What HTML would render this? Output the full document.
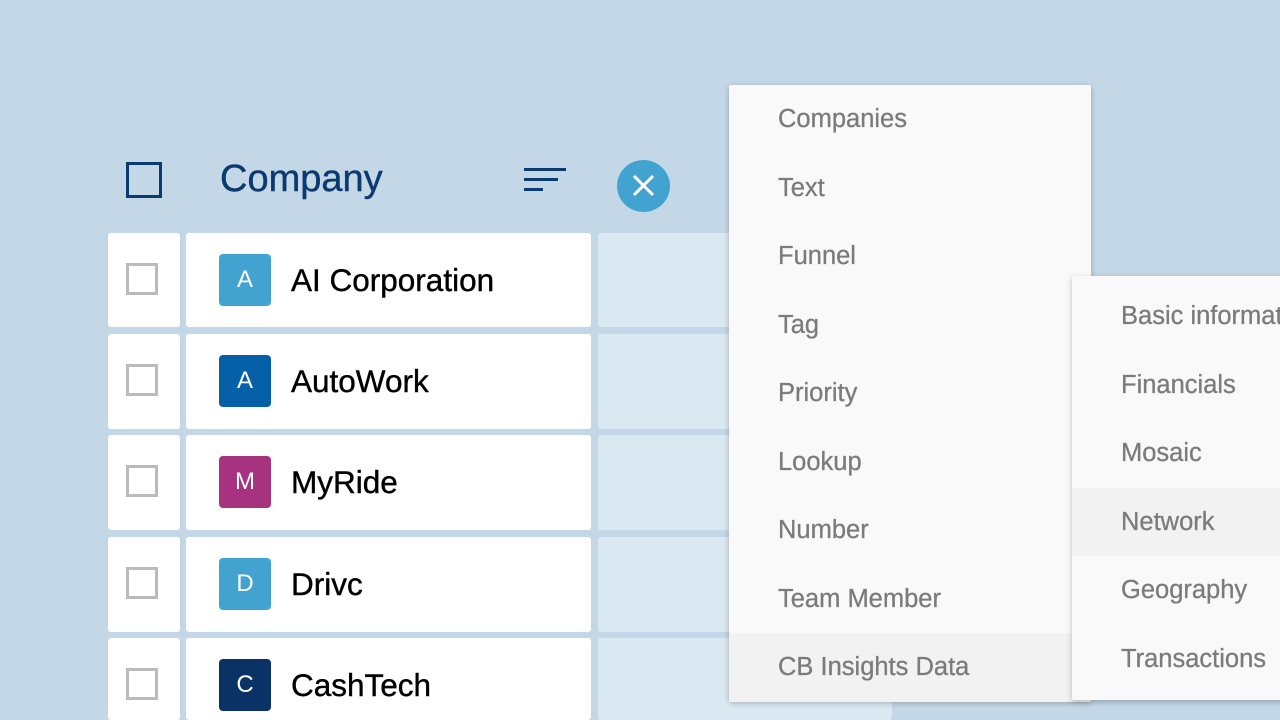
<!DOCTYPE html>
<html style="height:720px;overflow:hidden"><head><style>
body{margin:0;width:1280px;height:720px;background:#c4d7e6;position:relative;overflow:hidden;font-family:"Liberation Sans",Arial,sans-serif}
.a{position:absolute}
.cb{position:absolute;left:108px;width:72px;background:#fff;border-radius:3px}
.cb::after{content:"";position:absolute;left:18px;top:30px;width:32px;height:32px;border:3px solid #bbb;box-sizing:border-box}
.nm{position:absolute;left:186px;width:405px;background:#fff;border-radius:3px}
.c3{position:absolute;left:598px;width:294px;background:#dae8f2;border-radius:3px}
.av{position:absolute;left:33px;top:21px;width:52px;height:52px;border-radius:4px;color:#fff;font-size:24px;text-align:center;line-height:52px}
.nt{position:absolute;left:105px;top:0;line-height:94px;font-size:31.5px;color:#000;-webkit-text-stroke:0.4px #000}
.p{position:absolute;background:#f9f9f9;box-shadow:0 2px 6px rgba(0,0,0,.25);border-radius:2px}
.it{position:absolute;left:0;right:0;height:68.5px;line-height:68.5px;font-size:25.5px;color:#7b7b7b;-webkit-text-stroke:0.3px #7b7b7b}
</style></head><body>
<div class="a" style="left:126px;top:162px;width:36px;height:36px;border:3px solid #0b3a70;box-sizing:border-box"></div>
<div class="a" style="left:220px;top:155px;font-size:38px;color:#0b3a70;line-height:48px;-webkit-text-stroke:0.4px #0b3a70">Company</div>
<div class="a" style="left:524px;top:168px;width:42px;height:3px;background:#0b3a70"></div>
<div class="a" style="left:524px;top:178px;width:34px;height:3px;background:#0b3a70"></div>
<div class="a" style="left:524px;top:188px;width:19px;height:3px;background:#0b3a70"></div>
<div class="a" style="left:617px;top:160px;width:53px;height:52px;border-radius:50%;background:#43a3d0"><svg width="53" height="52"><path d="M17 16L36 35M36 16L17 35" stroke="#fff" stroke-width="3"/></svg></div>

<div class="cb" style="top:233px;height:94px"></div><div class="nm" style="top:233px;height:94px"><div class="av" style="background:#43a3d0">A</div><div class="nt">AI Corporation</div></div><div class="c3" style="top:233px;height:94px"></div>
<div class="cb" style="top:334px;height:95px"></div><div class="nm" style="top:334px;height:95px"><div class="av" style="background:#0660a8">A</div><div class="nt">AutoWork</div></div><div class="c3" style="top:334px;height:95px"></div>
<div class="cb" style="top:435px;height:95px"></div><div class="nm" style="top:435px;height:95px"><div class="av" style="background:#a7327f">M</div><div class="nt">MyRide</div></div><div class="c3" style="top:435px;height:95px"></div>
<div class="cb" style="top:537px;height:95px"></div><div class="nm" style="top:537px;height:95px"><div class="av" style="background:#43a3d0">D</div><div class="nt">Drivc</div></div><div class="c3" style="top:537px;height:95px"></div>
<div class="cb" style="top:638px;height:82px"></div><div class="nm" style="top:638px;height:82px"><div class="av" style="background:#0b3265">C</div><div class="nt">CashTech</div></div><div class="c3" style="top:638px;height:82px"></div>

<div class="p" style="left:729px;top:85px;width:362px;height:616px">
<div class="it" style="top:0;padding-left:49px">Companies</div>
<div class="it" style="top:68.5px;padding-left:49px">Text</div>
<div class="it" style="top:137px;padding-left:49px">Funnel</div>
<div class="it" style="top:205.5px;padding-left:49px">Tag</div>
<div class="it" style="top:274px;padding-left:49px">Priority</div>
<div class="it" style="top:342.5px;padding-left:49px">Lookup</div>
<div class="it" style="top:411px;padding-left:49px">Number</div>
<div class="it" style="top:479.5px;padding-left:49px">Team Member</div>
<div class="it" style="top:548px;padding-left:49px;background:#f2f2f2">CB Insights Data</div>
</div>
<div class="p" style="left:1072px;top:276px;width:230px;height:424px;overflow:hidden;white-space:nowrap">
<div class="it" style="top:6px;padding-left:49px">Basic information</div>
<div class="it" style="top:74.5px;padding-left:49px">Financials</div>
<div class="it" style="top:143px;padding-left:49px">Mosaic</div>
<div class="it" style="top:211.5px;padding-left:49px;background:#f2f2f2">Network</div>
<div class="it" style="top:280px;padding-left:49px">Geography</div>
<div class="it" style="top:348.5px;padding-left:49px">Transactions</div>
</div>
</body></html>
